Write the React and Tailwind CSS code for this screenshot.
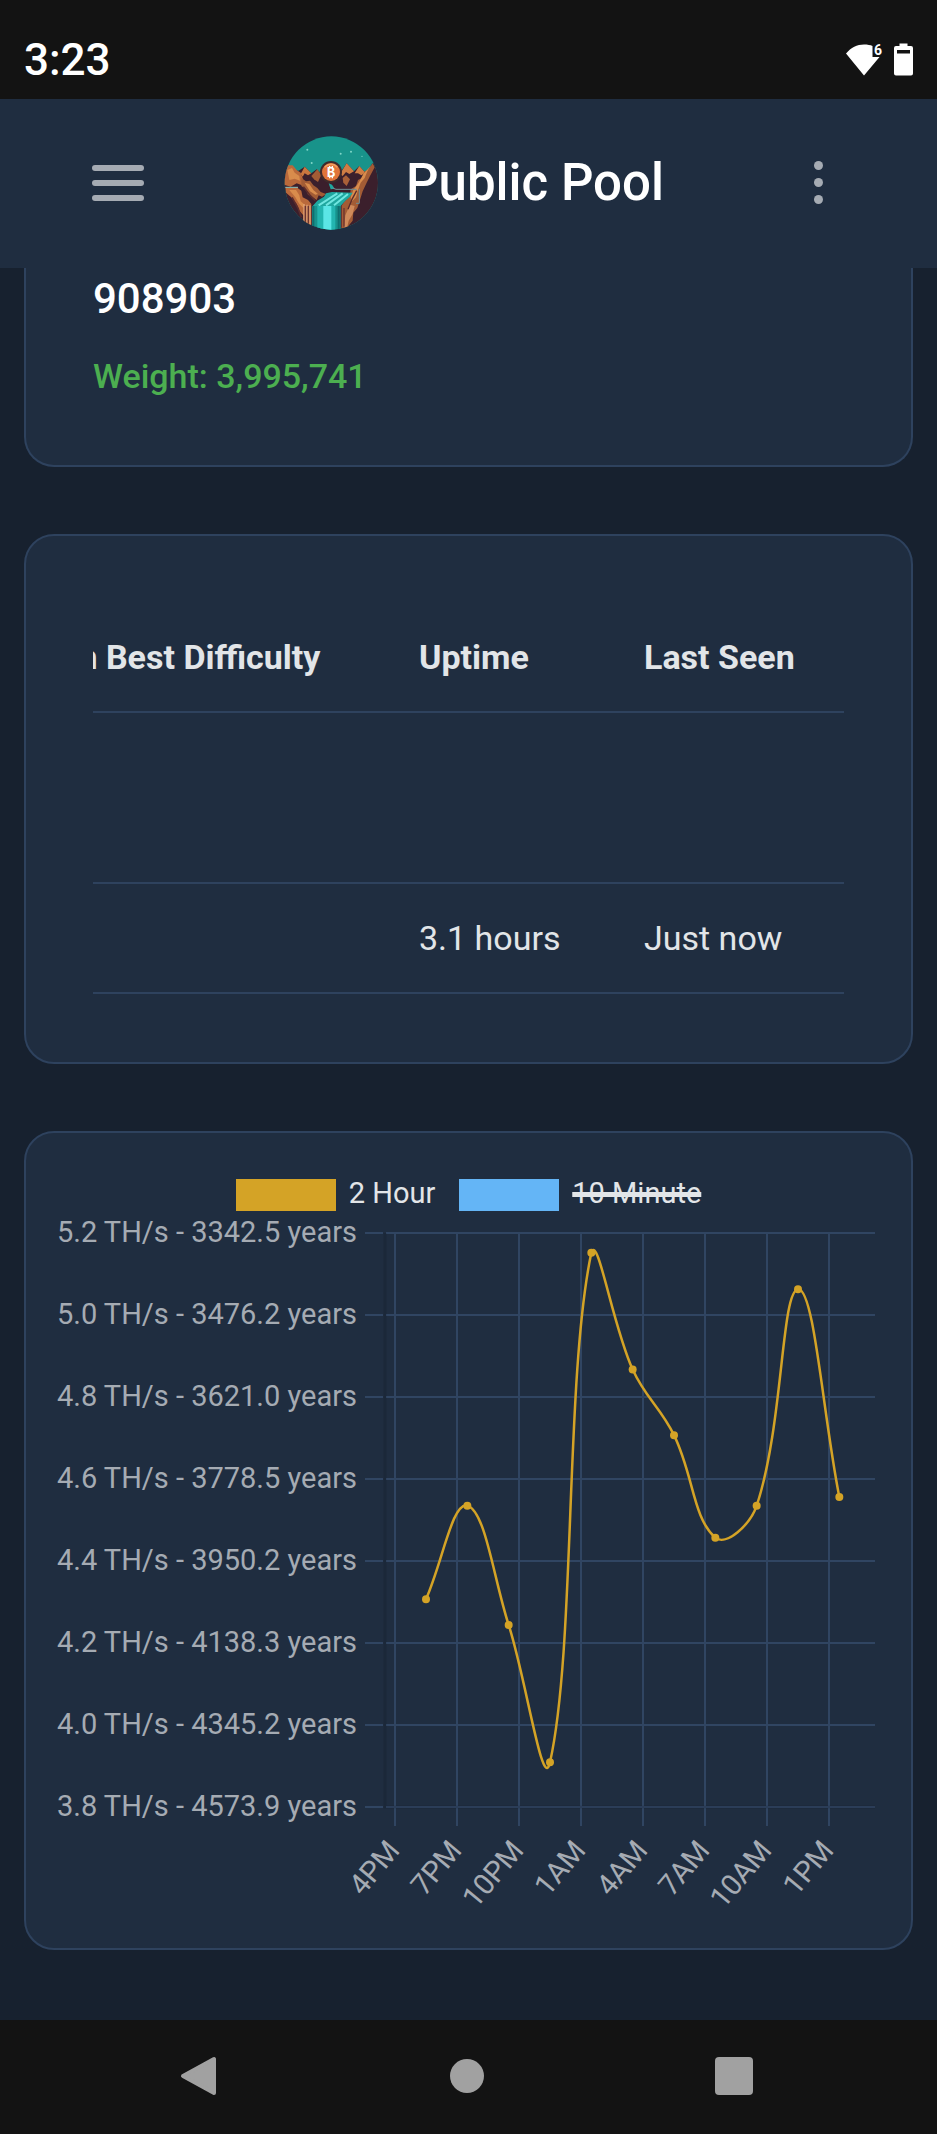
import React, { useState } from 'react';

const SERIES = [
  { id: '2h', label: '2 Hour', swatch: 'bg-[#d4a326]', hidden: false },
  { id: '10m', label: '10 Minute', swatch: 'bg-[#64b5f6]', hidden: true },
];

const Y_TICKS = [
  '5.2 TH/s - 3342.5 years',
  '5.0 TH/s - 3476.2 years',
  '4.8 TH/s - 3621.0 years',
  '4.6 TH/s - 3778.5 years',
  '4.4 TH/s - 3950.2 years',
  '4.2 TH/s - 4138.3 years',
  '4.0 TH/s - 4345.2 years',
  '3.8 TH/s - 4573.9 years',
];

const X_TICKS = ['4PM', '7PM', '10PM', '1AM', '4AM', '7AM', '10AM', '1PM'];

// hours since 4PM, TH/s
const POINTS = [
  [1.5, 4.307],
  [3.5, 4.535],
  [5.5, 4.244],
  [7.5, 3.909],
  [9.5, 5.152],
  [11.5, 4.867],
  [13.5, 4.707],
  [15.5, 4.457],
  [17.5, 4.535],
  [19.5, 5.063],
  [21.5, 4.556],
];

const PLOT = { left: 329, right: 819, top: 22, stepX: 62, stepY: 82, firstX: 339 };
const PLOT_BOTTOM = PLOT.top + PLOT.stepY * 7;

const toXY = ([hours, rate]) => ({
  x: PLOT.firstX + (hours / 3) * PLOT.stepX,
  y: PLOT.top + ((5.2 - rate) / 0.2) * PLOT.stepY,
});

const clampY = (y) => Math.min(PLOT_BOTTOM, Math.max(PLOT.top, y));

// cardinal spline with the tension split by neighbour distance
function buildPath(pts, tension = 0.4) {
  const controls = pts.map((cur, i) => {
    const prev = pts[i - 1] || cur;
    const next = pts[i + 1] || cur;
    const d01 = Math.hypot(cur.x - prev.x, cur.y - prev.y);
    const d12 = Math.hypot(next.x - cur.x, next.y - cur.y);
    const fa = (tension * d01) / (d01 + d12);
    const fb = (tension * d12) / (d01 + d12);
    const dx = next.x - prev.x;
    const dy = next.y - prev.y;
    return {
      before: { x: cur.x - fa * dx, y: clampY(cur.y - fa * dy) },
      after: { x: cur.x + fb * dx, y: clampY(cur.y + fb * dy) },
    };
  });
  return pts.reduce((d, p, i) => {
    if (i === 0) return `M${p.x} ${p.y}`;
    const a = controls[i - 1].after;
    const b = controls[i].before;
    return `${d} C${a.x} ${a.y} ${b.x} ${b.y} ${p.x} ${p.y}`;
  }, '');
}

function Logo() {
  return (
    <svg viewBox="46 46 282 282" className="w-[94px] h-[94px] shrink-0" aria-hidden="true">
      <defs>
        <clipPath id="logo-clip">
          <circle cx="188" cy="187" r="140" />
        </clipPath>
      </defs>
      <g clipPath="url(#logo-clip)">
        <rect x="46" y="46" width="284" height="284" fill="#18938a" />
        {/* Stars */}
        <g fill="#7fd6c8">
          <circle cx="116" cy="87" r="3" />
          <circle cx="129" cy="127" r="3" />
          <circle cx="216" cy="99" r="3" />
          <circle cx="247" cy="93" r="3" />
          <circle cx="280" cy="107" r="2" />
        </g>
        {/* Canyon floor and far peaks */}
        <path d="M46 146L90 150L108 138L128 158L144 146L160 160L212 160L234 128L256 152L272 136L290 156L312 128L330 128V330H46Z" fill="#3b1f2c" />
        <path d="M96 160L108 138L128 158L118 164L108 158L102 168Z" fill="#c9763f" />
        <path d="M128 166L146 146L158 162L148 184L136 176Z" fill="#a35c35" />
        <path d="M214 160L234 128L256 152L242 160L232 154L222 166Z" fill="#cf7d44" />
        <path d="M258 158L272 136L290 156L278 164L268 158Z" fill="#cf7d44" />
        <path d="M222 172L232 164L244 176L234 196L224 186Z" fill="#a96038" />
        {/* Left cliffs */}
        <path d="M46 134H72L84 148L96 156L104 178L100 194L84 188L66 198L46 192Z" fill="#b9693b" />
        <path d="M56 148L70 142L78 156L92 166L94 180L78 174L62 178Z" fill="#d98c4c" />
        <path d="M98 172L112 182L124 180L134 194L146 202L156 214L172 220L160 228L150 224L144 238L130 228L118 222L112 206L98 196Z" fill="#a35c35" />
        <path d="M108 186L122 190L134 208L148 220L140 222L124 212Z" fill="#d98c4c" />
        <path d="M50 200L66 202L84 200L98 210L102 230L118 238L128 250V312H104V284L92 270L84 250L66 228L52 216Z" fill="#b9693b" />
        <path d="M62 208L82 208L92 224L96 242L108 252L104 262L92 250L80 230Z" fill="#d98c4c" />
        <path d="M106 250V310M115 252V312M124 254V314" stroke="#e0a47a" strokeWidth="4" />
        <path d="M110 256V310M119 256V314" stroke="#6b3430" strokeWidth="4" />
        <path d="M50 200H88" stroke="#8fc7be" strokeWidth="3" />
        <path d="M104 198L124 224L140 240M70 230L88 262L98 290" stroke="#5a2b2c" strokeWidth="5" fill="none" />
        {/* Right cliffs */}
        <path d="M312 128L300 146L288 152L280 172L268 178L262 196L246 206L244 226L228 242L218 256V322H234L252 300L254 276L266 262L272 244L282 212L294 186L304 166L318 140Z" fill="#a35c35" />
        <path d="M308 134L296 152L288 172L276 186L268 208L262 230L250 242L246 230L254 208L270 186L284 160Z" fill="#d98c4c" />
        <path d="M244 252L258 256L252 280L240 300L236 318L226 320L230 284Z" fill="#d08a5a" />
        <path d="M218 256V320M226 262V318" stroke="#6b3430" strokeWidth="4" />
        <path d="M264 210L250 236L238 266" stroke="#5a2b2c" strokeWidth="4" fill="none" />
        {/* River */}
        <path d="M172 218L190 214L252 216L244 228L230 240L214 258H130L146 240L166 228Z" fill="#1fa79f" />
        <path d="M206 218L150 254M222 218L172 254M238 220L196 254" stroke="#6fe6e0" strokeWidth="6" />
        <rect x="130" y="256" width="86" height="74" fill="#17928c" />
        <rect x="146" y="256" width="54" height="74" fill="#23b5b0" />
        <rect x="164" y="256" width="24" height="74" fill="#5be6e6" />
        <path d="M134 256V330M210 256V330" stroke="#0f6f70" strokeWidth="6" />
        <path d="M180 188L190 192L198 204L186 206Z" fill="#1fa79f" />
        <path d="M192 202L202 206H264M272 206V248H262" stroke="#6f8f95" strokeWidth="3" fill="none" />
        {/* Coin */}
        <circle cx="187" cy="154" r="33" fill="#3f2a2b" />
        <circle cx="187" cy="154" r="27" fill="#e0743a" />
        <path d="M168 140A24 24 0 0 1 206 140" stroke="#f2a060" strokeWidth="4" fill="none" />
        <text x="187" y="169" textAnchor="middle" fontSize="42" fontWeight="700" fill="#fff" fontFamily="'Liberation Mono', monospace">B</text>
        <path d="M183 136V142M191 136V142M183 167V173M191 167V173" stroke="#fff" strokeWidth="4" />
      </g>
    </svg>
  );
}

function StatusBar() {
  return (
    <div className="flex h-[99px] items-center justify-between bg-[#131313] px-6 pt-5 text-white">
      <span className="text-[44px] leading-[54px] font-medium">3:23</span>
      <div className="flex items-center gap-2">
        <svg viewBox="0 -6 40 44" className="h-[44px] w-[40px]" aria-hidden="true">
          <path d="M0 9.500C5 3.500 11 .5 18 .5C21.500 .5 24.500 1 26.500 2V13H33.500L18 31.500Z" fill="#fff" />
          <text x="28" y="11" fontSize="14" fontWeight="700" fill="#fff">6</text>
        </svg>
        <svg viewBox="0 0 19 33" className="h-[33px] w-[19px]" aria-hidden="true">
          <path fillRule="evenodd" d="M5.500 0.500H13.500V3H17Q19 3 19 5V30.500Q19 32.500 17 32.500H2Q0 32.500 0 30.500V5Q0 3 2 3H5.500ZM3 7V10.500H16V7Z" fill="#fff" />
        </svg>
      </div>
    </div>
  );
}

function TopBar() {
  return (
    <header className="flex h-[169px] items-center justify-between bg-[#1f2d40] pr-[105px] pb-[2px] pl-[92px]">
      <button type="button" aria-label="Menu" className="flex w-[52px] flex-col gap-[9px]">
        <span className="h-[6px] rounded-full bg-[#a5abb3]" />
        <span className="h-[6px] rounded-full bg-[#a5abb3]" />
        <span className="h-[6px] rounded-full bg-[#a5abb3]" />
      </button>
      <a href="#" className="flex items-center gap-7">
        <Logo />
        <span className="text-[51px] leading-[60px] font-medium text-white">Public Pool</span>
      </a>
      <button type="button" aria-label="More options" className="flex w-[28px] flex-col items-center gap-2">
        <span className="size-[9px] rounded-full bg-[#a5abb3]" />
        <span className="size-[9px] rounded-full bg-[#a5abb3]" />
        <span className="size-[9px] rounded-full bg-[#a5abb3]" />
      </button>
    </header>
  );
}

function BlockCard() {
  return (
    <section className="rounded-b-[30px] border-2 border-t-0 border-[#2e425e] bg-[#1f2d40] px-[67px] pt-[6px] pb-[67px]">
      <div className="text-[42px] leading-[50px] font-medium text-white">908903</div>
      <div className="mt-[30px] text-[34px] leading-[44px] font-medium text-[#4caf50]">Weight: 3,995,741</div>
    </section>
  );
}

function WorkersCard() {
  return (
    <section className="rounded-[30px] border-2 border-[#2e425e] bg-[#1f2d40] px-[67px] pt-[67px] pb-[68px]">
      {/* scrolled to the last columns */}
      <div className="flex justify-end overflow-hidden">
        <table className="w-[903px] shrink-0 table-fixed text-left text-[34px] leading-[44px] text-[#e2e5e8]">
          <thead>
            <tr className="h-[109px] border-b-2 border-[#2e425e]">
              <th className="pl-[35px] font-bold whitespace-nowrap">Session Best Difficulty</th>
              <th className="w-[225px] pl-[35px] font-bold">Uptime</th>
              <th className="w-[235px] pl-[35px] font-bold">Last Seen</th>
            </tr>
          </thead>
          <tbody>
            <tr className="h-[171px] border-b-2 border-[#2e425e]">
              <td />
              <td />
              <td />
            </tr>
            <tr className="h-[110px] border-b-2 border-[#2e425e]">
              <td />
              <td className="pl-[35px]">3.1 hours</td>
              <td className="pl-[35px]">Just now</td>
            </tr>
          </tbody>
        </table>
      </div>
    </section>
  );
}

function HashrateChart({ showLine }) {
  const pts = POINTS.map(toXY);

  return (
    <svg viewBox="0 0 825 704" className="block w-full" role="img" aria-label="Hashrate">
      <g stroke="#304562" strokeWidth="2">
        {Y_TICKS.map((label, i) => {
          const y = PLOT.top + i * PLOT.stepY;
          return <path key={label} d={`M309 ${y}H${PLOT.left - 2}M${PLOT.left + 1} ${y}H${PLOT.right}`} />;
        })}
        {X_TICKS.map((label, i) => {
          const x = PLOT.firstX + i * PLOT.stepX;
          return <path key={label} d={`M${x} ${PLOT.top}V${PLOT_BOTTOM + 19}`} />;
        })}
      </g>
      <path
        d={`M${PLOT.left} ${PLOT.top}V${PLOT_BOTTOM}H${PLOT.right}`}
        stroke="#000"
        strokeOpacity="0.1"
        strokeWidth="3"
        fill="none"
      />

      <g fill="#a5abb3" fontSize="29">
        {Y_TICKS.map((label, i) => (
          <text key={label} x="301" y={PLOT.top + i * PLOT.stepY + 9} textAnchor="end">
            {label}
          </text>
        ))}
        {X_TICKS.map((label, i) => {
          const x = PLOT.firstX + i * PLOT.stepX + 6;
          const y = PLOT_BOTTOM + 44;
          return (
            <text key={label} x={x} y={y} textAnchor="end" transform={`rotate(-50 ${x} ${y})`}>
              {label}
            </text>
          );
        })}
      </g>

      {showLine && (
        <g>
          <path d={buildPath(pts)} fill="none" stroke="#d4a326" strokeWidth="2.500" />
          {pts.map((p) => (
            <circle key={p.x} cx={p.x} cy={p.y} r="4" fill="#d4a326" />
          ))}
        </g>
      )}
    </svg>
  );
}

function ChartCard() {
  const [series, setSeries] = useState(SERIES);

  const toggle = (id) =>
    setSeries((list) => list.map((s) => (s.id === id ? { ...s, hidden: !s.hidden } : s)));

  return (
    <section className="rounded-[30px] border-2 border-[#2e425e] bg-[#1f2d40] px-[30px] pt-[46px] pb-[33px]">
      <div className="flex justify-center gap-6">
        {series.map((s) => (
          <button
            key={s.id}
            type="button"
            onClick={() => toggle(s.id)}
            className="flex h-8 items-start gap-[13px] text-[29px] leading-7 text-[#e2e5e8]"
          >
            <span className={`h-8 w-[100px] ${s.swatch}`} />
            <span className={s.hidden ? 'line-through decoration-[5px]' : ''}>{s.label}</span>
          </button>
        ))}
      </div>
      <HashrateChart showLine={!series[0].hidden} />
    </section>
  );
}

function NavBar() {
  return (
    <nav className="flex h-[114px] items-center justify-between bg-[#131313] pr-[184px] pb-[2px] pl-[180px]">
      <button type="button" aria-label="Back">
        <svg viewBox="0 0 38 40" className="h-[40px] w-[38px]">
          <path d="M3 20L34 3V37Z" fill="#a1a1a1" stroke="#a1a1a1" strokeWidth="4" strokeLinejoin="round" />
        </svg>
      </button>
      <button type="button" aria-label="Home" className="size-[34px] rounded-full bg-[#a1a1a1]" />
      <button type="button" aria-label="Recents" className="size-[38px] rounded-[4px] bg-[#a1a1a1]" />
    </nav>
  );
}

export default function App() {
  return (
    <div className="flex min-h-screen flex-col bg-[#17212f] font-[Roboto,sans-serif]">
      <StatusBar />
      <TopBar />
      <main className="flex flex-1 flex-col gap-[67px] px-6 pb-[70px]">
        <BlockCard />
        <WorkersCard />
        <ChartCard />
      </main>
      <NavBar />
    </div>
  );
}
